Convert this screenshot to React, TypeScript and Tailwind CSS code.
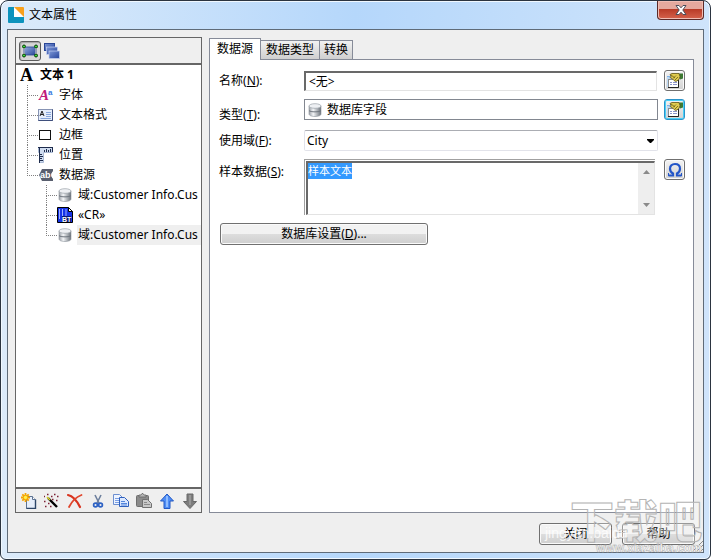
import { useEffect, useRef } from "react";
import type { ReactNode } from "react";

function AppLogo() {
  return (
    <svg className="size-4" viewBox="0 0 16 16">
      <path d="M0 1a1 1 0 0 1 1-1h5v10h10v5a1 1 0 0 1-1 1H1a1 1 0 0 1-1-1z" fill="#0c93bd" />
      <path d="M6 0l10 10H6z" fill="#fff" />
      <path d="M6 0h9a1 1 0 0 1 1 1v9z" fill="#f9a01b" />
    </svg>
  );
}

function SelectIcon() {
  return (
    <svg className="size-4" viewBox="0 0 16 16">
      <defs>
        <linearGradient id="sel" x1="0" y1="0" x2="1" y2="1">
          <stop offset="0" stopColor="#8fa6dc" />
          <stop offset="1" stopColor="#2b4a9b" />
        </linearGradient>
      </defs>
      <rect x="3" y="4" width="10" height="8" fill="url(#sel)" />
      <path d="M4 4h8M4 12h8M2 6v4M14 6v4" stroke="#27448f" strokeWidth="0.8" />
      {[2, 14].map((cx) =>
        [3.5, 12.5].map((cy) => (
          <circle key={`${cx}-${cy}`} cx={cx} cy={cy} r="1.5" fill="#3fe03f" stroke="#043504" strokeWidth="1" />
        ))
      )}
    </svg>
  );
}

function LayersIcon() {
  return (
    <svg className="size-4" viewBox="0 0 16 16">
      <defs>
        <linearGradient id="lay" x1="0" y1="0" x2="1" y2="1">
          <stop offset="0" stopColor="#7c97d8" />
          <stop offset="1" stopColor="#24429a" />
        </linearGradient>
      </defs>
      <rect x="0.5" y="0.5" width="10" height="7" fill="url(#lay)" stroke="#2a4797" />
      <rect x="2.5" y="4" width="11" height="7.5" fill="url(#lay)" stroke="#c9d5f2" strokeWidth="0.7" />
      <rect x="5" y="8" width="10.5" height="7.5" fill="url(#lay)" stroke="#c9d5f2" strokeWidth="0.7" />
    </svg>
  );
}

function FontIcon() {
  return (
    <svg className="size-4" viewBox="0 0 16 16">
      <text x="1" y="13" fontSize="15" fontWeight="bold" fontStyle="italic" fontFamily="Liberation Serif, serif" fill="#c0187a">A</text>
      <text x="10" y="8" fontSize="8" fontWeight="bold" fontFamily="Liberation Sans, sans-serif" fill="#3a7be0">a</text>
    </svg>
  );
}

function FormatIcon() {
  return (
    <svg className="size-4" viewBox="0 0 16 16">
      <rect x="0.5" y="2.5" width="14" height="11" fill="#e6eefb" stroke="#8794b4" />
      <path d="M0.5 13.5h14v-11" fill="none" stroke="#3f4f7c" />
      <path d="M2 9l2-5 2 5M3 7.500h2" fill="none" stroke="#222" />
      <path d="M8 5.500h5M8 7.500h5M2.500 11.500h10.500M8 9.500h5" stroke="#8aa8dc" />
    </svg>
  );
}

function BorderIcon() {
  return (
    <svg className="size-4" viewBox="0 0 16 16">
      <rect x="1.500" y="3.500" width="11" height="9" fill="#fff" stroke="#111" />
    </svg>
  );
}

function RulerIcon() {
  return (
    <svg className="size-4" viewBox="0 0 16 16">
      <path d="M0.500 0.500h14v5h-9v10h-4v-10h-1z" fill="#cfdcf0" stroke="#a9b9d4" />
      <path d="M0 0.500h15M1.500 0v16" stroke="#1e2c4d" />
      <path d="M6.500 3v2M8.500 2v3M10.500 3v2M12.500 2v3M14.500 1v4M2 7.500h2M2 9.500h3M2 11.500h2M2 13.500h3" stroke="#1e2c4d" />
    </svg>
  );
}

function AbcIcon() {
  return (
    <svg className="size-4" viewBox="0 0 16 16">
      <path d="M4 2h11v2c-2 2-2 6 0 8v2H4L1 8z" fill="#595f6e" />
      <text x="2" y="11" fontSize="9" fontWeight="bold" fontFamily="Liberation Sans, sans-serif" fill="#fff">ab</text>
      <path d="M15 5c-2 2-2 4 0 6" fill="none" stroke="#fff" />
    </svg>
  );
}

function DatabaseIcon() {
  return (
    <svg className="size-4 shrink-0" viewBox="0 0 16 16">
      <defs>
        <linearGradient id="db" x1="0" y1="0" x2="1" y2="0">
          <stop offset="0" stopColor="#9a9fa6" />
          <stop offset="0.35" stopColor="#f3f5f7" />
          <stop offset="1" stopColor="#6c737b" />
        </linearGradient>
      </defs>
      <path d="M2 4v8c0 1.500 2.500 2.500 6 2.500s6-1 6-2.500V4z" fill="url(#db)" stroke="#8d949c" strokeWidth="0.600" />
      <ellipse cx="8" cy="4" rx="6" ry="2.300" fill="#eef0f3" stroke="#9aa0a8" strokeWidth="0.700" />
      <path d="M2 8.500c1 1.800 11 1.800 12 0" fill="none" stroke="#6d747d" />
    </svg>
  );
}

function BarTenderIcon() {
  return (
    <svg className="size-4" viewBox="0 0 16 16">
      <path d="M0.500 0.500h11l4 4v11h-15z" fill="#1634e8" stroke="#000" />
      <path d="M2.500 2v10M5.500 2v9M9 2v7" stroke="#9db0ff" />
      <path d="M11.500 0.500v4h4z" fill="#fff" stroke="#000" />
      <rect x="5" y="9" width="9" height="6" fill="#0a1a70" />
      <text x="5" y="15" fontSize="7" fontWeight="bold" fontFamily="Liberation Sans, sans-serif" fill="#fff">BT</text>
    </svg>
  );
}

function NewIcon() {
  return (
    <svg className="size-4" viewBox="0 0 16 16">
      <path d="M5.500 3.500h6l3 3v9h-9z" fill="#e6eefa" stroke="#5d7392" />
      <path d="M14.500 6.500v9h-9" fill="none" stroke="#2d4668" strokeWidth="1.400" />
      <path d="M11.500 3.500v3h3" fill="#fff" stroke="#5d7392" />
      <path d="M4.500 0v9M0 4.500h9M1.300 1.300l6.400 6.400M7.700 1.300L1.300 7.700" stroke="#f5a300" strokeWidth="1.800" />
      <circle cx="4.500" cy="4.500" r="2.200" fill="#fff04a" stroke="#f5a300" />
    </svg>
  );
}

function WandIcon() {
  return (
    <svg className="size-4" viewBox="0 0 16 16">
      <path d="M4 5l9 9" stroke="#000" strokeWidth="2.400" />
      <path d="M3 4l3 3" stroke="#d8d22a" strokeWidth="1.600" />
      <path
        d="M3 1.500h1.500M7 3.500h1.500M10 1.500h1.500M13 3.500h1.500M8 6.500h1.500M12 7.500h1.500M0 8.500h1.500M4 10.500h1.500M1 13.500h1.500M6 13.500h1.500M0 3.500h1"
        stroke="#7c2034"
        strokeWidth="1.500"
      />
    </svg>
  );
}

function DeleteIcon() {
  return (
    <svg className="size-4" viewBox="0 0 16 16">
      <path d="M1 2c5 1 9 6 12 12" fill="none" stroke="#d8341f" strokeWidth="2.200" strokeLinecap="round" />
      <path d="M14.500 2C9 4 5 8 2 14" fill="none" stroke="#e0452c" strokeWidth="1.800" strokeLinecap="round" />
    </svg>
  );
}

function CutIcon() {
  return (
    <svg className="size-4" viewBox="0 0 16 16">
      <path d="M5 2l4.500 9M11 2L6.500 11" stroke="#6d7f9d" strokeWidth="1.600" />
      <circle cx="5.500" cy="12" r="1.900" fill="none" stroke="#2d62c4" strokeWidth="1.700" />
      <circle cx="10.500" cy="12" r="1.900" fill="none" stroke="#2d62c4" strokeWidth="1.700" />
    </svg>
  );
}

function CopyIcon() {
  return (
    <svg className="size-4" viewBox="0 0 16 16">
      <path d="M0.500 1.500h6l3 3v7h-9z" fill="#eef4ff" stroke="#6c8fd0" />
      <path d="M2 5.500h5M2 7.500h5M2 9.500h4" stroke="#7ba0e4" />
      <path d="M6.500 4.500h5l4 4v5h-9z" fill="#dbe8ff" stroke="#2f60bd" />
      <path d="M8 8.500h4M8 10.500h6M8 12h6" stroke="#5587dd" />
    </svg>
  );
}

function PasteIcon() {
  return (
    <svg className="size-4" viewBox="0 0 16 16">
      <rect x="0.500" y="2.500" width="12" height="11" rx="1" fill="#8b8b8b" stroke="#6f6f6f" />
      <path d="M3 4V2h2l1-1.500h1L8 2h2v2z" fill="#b5b5b5" stroke="#666" strokeWidth="0.800" />
      <path d="M6.500 6.500h5l4 4v4h-9z" fill="#c8c8c8" stroke="#707070" />
      <path d="M8 9.500h3M8 11.500h6" stroke="#8a8a8a" />
    </svg>
  );
}

function UpIcon() {
  return (
    <svg className="size-4" viewBox="0 0 16 16">
      <path d="M8 1l6.500 7H11v7.500H5V8H1.500z" fill="#4f8df5" stroke="#2258c4" />
      <path d="M8 3v11" stroke="#8fbcff" strokeWidth="2" />
    </svg>
  );
}

function DownIcon() {
  return (
    <svg className="size-4" viewBox="0 0 16 16">
      <path d="M8 15.500L1.500 8.500H5V1h6v7.500h3.500z" fill="#7d7d7d" stroke="#696969" />
      <path d="M8 2v10" stroke="#979797" strokeWidth="2" />
    </svg>
  );
}

function PropertiesIcon() {
  return (
    <svg className="size-4" viewBox="0 0 16 16">
      <rect x="0" y="3" width="6" height="11" fill="#bcd9f5" />
      <path d="M0 3.500h5" stroke="#7fb2e6" />
      <rect x="1.500" y="6.500" width="10" height="8" fill="#fff" stroke="#8b8b8b" />
      <path d="M1 14.500h10.500V7" fill="none" stroke="#222" />
      <path d="M3 9.500h2M6 9.500h4M3 11.500h2M6 11.500h4" stroke="#8a93c9" />
      <path d="M12 0.500h4v5l-3 1z" fill="#3c7a34" />
      <path d="M3 1.500L5 0.500h7l1 3-1 3-3 2-2-1-2-2-2-1 1-1z" fill="#e0cc50" stroke="#5e5215" strokeWidth="0.800" />
      <path d="M4 2l4 3M6 5.500l3-3M8 7l3-3" fill="none" stroke="#6b5c14" strokeWidth="0.800" />
    </svg>
  );
}

function OmegaIcon() {
  return (
    <svg className="size-4" viewBox="0 0 16 16">
      <path
        d="M1.500 13.500h4.500v-2C3.800 10.300 3 8.500 3 6.700 3 3.700 5 2 8 2s5 1.700 5 4.700c0 1.800-.8 3.600-3 4.800v2h4.500"
        fill="none"
        stroke="#2456c8"
        strokeWidth="2.200"
      />
      <path d="M1.500 11v3M14.500 11v3" stroke="#2456c8" />
    </svg>
  );
}

type Node = { label: string; icon: ReactNode; selected?: boolean };

const properties: Node[] = [
  { label: "字体", icon: <FontIcon /> },
  { label: "文本格式", icon: <FormatIcon /> },
  { label: "边框", icon: <BorderIcon /> },
  { label: "位置", icon: <RulerIcon /> },
  { label: "数据源", icon: <AbcIcon /> },
];

const sources: Node[] = [
  { label: "域:Customer Info.Cus", icon: <DatabaseIcon /> },
  { label: "«CR»", icon: <BarTenderIcon /> },
  { label: "域:Customer Info.Cus", icon: <DatabaseIcon />, selected: true },
];

const tools = [
  { label: "新建", icon: <NewIcon /> },
  { label: "向导", icon: <WandIcon /> },
  { label: "删除", icon: <DeleteIcon /> },
  { label: "剪切", icon: <CutIcon /> },
  { label: "复制", icon: <CopyIcon /> },
  { label: "粘贴", icon: <PasteIcon /> },
  { label: "上移", icon: <UpIcon /> },
  { label: "下移", icon: <DownIcon /> },
];

function TreeRow({ node, last }: { node: Node; last: boolean }) {
  return (
    <li role="treeitem" className="flex h-5 items-center whitespace-nowrap">
      <span className="flex h-5 w-[11px] shrink-0 flex-col">
        <span className="h-[11px] border-b border-l border-dotted border-[#808080]" />
        {!last && <span className="grow border-l border-dotted border-[#808080]" />}
      </span>
      <span className="shrink-0">{node.icon}</span>
      <span className={`ml-1 h-5 grow pl-px leading-5 ${node.selected ? "bg-[#efefef]" : ""}`}>{node.label}</span>
    </li>
  );
}

function SideButton({ label, active, children }: { label: string; active?: boolean; children: ReactNode }) {
  return (
    <button
      aria-label={label}
      className={`flex size-[21px] shrink-0 items-center justify-center rounded-[3px] border bg-gradient-to-b from-[#f3f3f3] to-[#d2d2d2] ${
        active ? "border-[#2c93c9] ring-1 ring-inset ring-[#48d0f8]" : "border-[#707070] ring-1 ring-inset ring-[#fafafa]"
      }`}
    >
      {children}
    </button>
  );
}

function Label({ htmlFor, text, hotkey }: { htmlFor: string; text: string; hotkey: string }) {
  return (
    <label htmlFor={htmlFor} className="w-[85px] shrink-0">
      {text}(<u>{hotkey}</u>):
    </label>
  );
}

const buttonStyle =
  "h-[22px] rounded-[3px] border border-[#707070] bg-gradient-to-b from-[#f2f2f2] from-50% via-[#dddddd] via-50% to-[#cfcfcf] shadow-[inset_0_0_0_1px_#fafafa]";

export default function App() {
  const sample = useRef<HTMLTextAreaElement>(null);

  useEffect(() => {
    sample.current?.focus();
    sample.current?.select();
  }, []);

  return (
    <div className="relative flex min-h-screen flex-col rounded-t-lg rounded-b-md border border-[#2b3440] bg-[#b9d9fb] bg-gradient-to-r from-[#dcebfa] via-[#b5d7fb] to-[#cfe4fb] px-[6px] pb-[6px] font-['Noto_Sans','Noto_Sans_CJK_SC',sans-serif] text-[12px] leading-4 text-black shadow-[inset_0_0_0_1px_#f0f8ff]">
      <header className="flex h-7 items-start pl-px">
        <h1 className="flex grow items-center gap-[5px] pt-[6px]">
          <AppLogo />
          文本属性
        </h1>
        <button
          aria-label="关闭窗口"
          className="flex h-[19px] w-[47px] items-center justify-center rounded-b-[4px] border border-t-0 border-[#5b2a28] bg-gradient-to-b from-[#e5a99e] from-45% via-[#b83a26] via-45% to-[#d5624c] shadow-[inset_0_0_0_1px_#f0bdb4]"
        >
          <svg className="h-[10px] w-3" viewBox="0 0 12 10">
            <path d="M1 .500h3l2 2.300 2-2.300h3L7.800 5 11 9.500H8L6 7.200 4 9.500H1L4.200 5z" fill="#fff" stroke="#4c4f5c" strokeWidth="1" />
          </svg>
        </button>
      </header>

      <main className="flex grow flex-col border border-[#5f6b78] bg-[#efefef] px-[7px] pt-[7px]">
        <div className="flex grow gap-[7px]">
          <aside className="flex w-[187px] shrink-0 flex-col border border-[#666]">
            <div className="flex h-[25px] items-center gap-[3px] pl-[3px]">
              <button aria-label="选择" className="flex h-5 w-[22px] items-center justify-center rounded-[3px] border border-[#5c5c5c] bg-[#d6d6d6] shadow-[inset_1px_1px_1px_#a5a5a5]">
                <SelectIcon />
              </button>
              <button aria-label="图层">
                <LayersIcon />
              </button>
            </div>
            <div className="grow overflow-hidden border-y-2 border-[#666] bg-white">
              <div className="flex h-5 items-center pl-1 font-bold">
                <span className="w-5 font-['Liberation_Serif',serif] text-[18px]">A</span>
                文本 1
              </div>
              <ul role="tree" className="pl-[11px]">
                {properties.map((node, i) => (
                  <TreeRow key={i} node={node} last={i === properties.length - 1} />
                ))}
                <li>
                  <ul role="group" className="pl-[19px]">
                    {sources.map((node, i) => (
                      <TreeRow key={i} node={node} last={i === sources.length - 1} />
                    ))}
                  </ul>
                </li>
              </ul>
            </div>
            <div className="flex h-[23px] items-center justify-between pr-[3px] pl-[5px]">
              {tools.map((tool) => (
                <button key={tool.label} aria-label={tool.label}>
                  {tool.icon}
                </button>
              ))}
            </div>
          </aside>

          <section className="flex grow flex-col pr-[2px]">
            <div role="tablist" className="flex h-[22px] items-end">
              <button role="tab" aria-selected="true" className="z-10 -mr-px -mb-px h-[22px] border border-b-0 border-[#868b98] bg-white px-[7px] pb-px">
                数据源
              </button>
              <button role="tab" aria-selected="false" className="h-[19px] border border-b-0 border-[#868b98] bg-gradient-to-b from-[#f2f2f2] to-[#cfcfcf] px-[5px]">
                数据类型
              </button>
              <button role="tab" aria-selected="false" className="h-[19px] border border-b-0 border-l-0 border-[#868b98] bg-gradient-to-b from-[#f2f2f2] to-[#cfcfcf] px-1">
                转换
              </button>
            </div>

            <div role="tabpanel" className="grow border border-[#868b98] bg-white pt-[10px] pr-2 pl-[9px]">
              <div className="flex items-center">
                <Label htmlFor="name" text="名称" hotkey="N" />
                <input
                  id="name"
                  defaultValue="<无>"
                  className="h-5 min-w-0 grow border border-t-2 border-l-2 border-[#e3e3e3] border-t-[#696969] border-l-[#696969] pl-[3px] outline-none"
                />
                <span className="ml-[7px]">
                  <SideButton label="名称属性">
                    <PropertiesIcon />
                  </SideButton>
                </span>
              </div>

              <div className="mt-2 flex items-start">
                <span className="flex pt-2">
                  <Label htmlFor="type" text="类型" hotkey="T" />
                </span>
                <span className="flex h-[21px] min-w-0 grow items-center gap-1 border border-[#828790] pl-[2px]">
                  <DatabaseIcon />
                  <input id="type" readOnly value="数据库字段" className="min-w-0 grow outline-none" />
                </span>
                <span className="ml-[6px]">
                  <SideButton label="类型属性" active>
                    <PropertiesIcon />
                  </SideButton>
                </span>
              </div>

              <div className="mt-[7px] mr-[27px] flex items-center">
                <Label htmlFor="field" text="使用域" hotkey="F" />
                <span className="relative flex min-w-0 grow">
                  <select
                    id="field"
                    className="h-[21px] w-full appearance-none rounded-[2px] border border-[#e2e3ea] border-t-[#abadb3] bg-white pl-[2px] outline-none"
                  >
                    <option>City</option>
                  </select>
                  <svg className="pointer-events-none absolute top-[9px] right-1 h-1 w-[7px]" viewBox="0 0 7 4">
                    <path d="M0 0h7v1L4 4H3L0 1z" />
                  </svg>
                </span>
              </div>

              <div className="mt-2 flex items-start">
                <span className="flex pt-[5px]">
                  <Label htmlFor="sample" text="样本数据" hotkey="S" />
                </span>
                <div className="flex h-14 min-w-0 grow border-t border-l border-[#a0a0a0] pt-px pl-px">
                  <div className="flex grow border border-t-2 border-l-2 border-[#e3e3e3] border-t-[#696969] border-l-[#696969]">
                    <textarea
                      id="sample"
                      ref={sample}
                      defaultValue="样本文本"
                      className="min-w-0 grow resize-none overflow-hidden text-[11px] outline-none selection:bg-[#3399ff] selection:text-white"
                    />
                    <div className="flex w-4 flex-col items-center justify-between bg-[#eeeeee] py-[7px]">
                      <svg className="h-1 w-[7px]" viewBox="0 0 7 4">
                        <path d="M0 4l3.500-4L7 4z" fill="#8a8a8a" />
                      </svg>
                      <svg className="h-1 w-[7px]" viewBox="0 0 7 4">
                        <path d="M0 0l3.500 4L7 0z" fill="#8a8a8a" />
                      </svg>
                    </div>
                  </div>
                </div>
                <span className="ml-[9px]">
                  <SideButton label="插入符号">
                    <OmegaIcon />
                  </SideButton>
                </span>
              </div>

              <button className={`mt-2 ml-px w-[208px] ${buttonStyle}`}>
                数据库设置(<u>D</u>)...
              </button>
            </div>
          </section>
        </div>

        <footer className="flex h-[39px] justify-end gap-[10px] pt-[10px] pr-px">
          <button className={`w-[73px] ${buttonStyle}`}>关闭</button>
          <button className={`w-[73px] ${buttonStyle}`}>帮助</button>
        </footer>
      </main>

      <svg className="pointer-events-none absolute right-[7px] bottom-[7px] size-3" viewBox="0 0 12 12">
        <path d="M1 12L12 1M5 12l7-7M9 12l3-3" stroke="#8e8e8e" />
      </svg>

      <svg className="pointer-events-none absolute right-[6px] bottom-0 h-[80px] w-[164px]" viewBox="0 0 164 80">
        <text x="30" y="59" fontSize="44" fontWeight="900" fontFamily="Noto Sans CJK SC, sans-serif" fill="#ffffff" fillOpacity="0.3" stroke="#b4b4b4" strokeWidth="1">
          下载吧
        </text>
        <text x="5" y="59" fontSize="14" fontFamily="Liberation Sans, sans-serif" fill="#ffffff" fillOpacity="0.8">
          jingyan.baidu
        </text>
        <text x="56" y="73" fontSize="12" fontWeight="bold" fontFamily="Liberation Sans, sans-serif" fill="#ffffff" stroke="#a8a8a8" strokeWidth="0.5">
          www.xiazaiba.com
        </text>
      </svg>
    </div>
  );
}
